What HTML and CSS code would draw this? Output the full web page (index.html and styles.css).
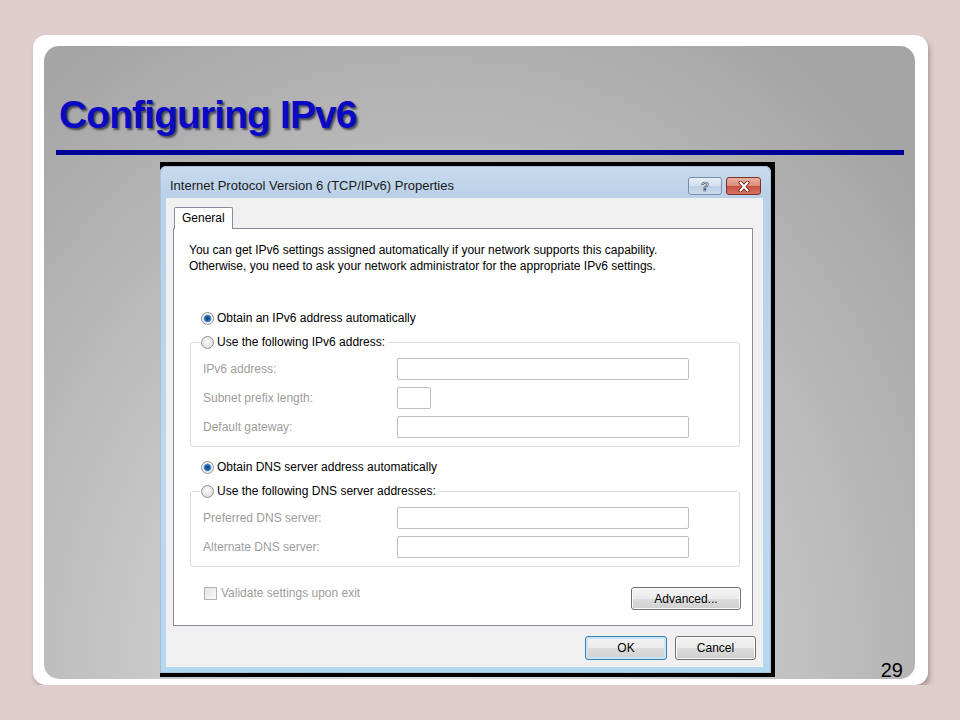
FILE: index.html
```html
<!DOCTYPE html>
<html lang="en">
<head>
    <meta charset="UTF-8">
    <meta name="viewport" content="width=device-width, initial-scale=1.0">
    <title>Configuring IPv6</title>
    <link rel="stylesheet" href="styles.css">
</head>
<body>
    <div class="slide">
        <div class="stage">
            <h1 class="title">Configuring IPv6</h1>
            <div class="rule"></div>

            <div class="shot-row">
                <div class="shot">
                    <div class="dialog">
                        <div class="titlebar">
                            <span class="caption">Internet Protocol Version 6 (TCP/IPv6) Properties</span>
                            <div class="caption-btns">
                                <span class="cbtn help">?</span>
                                <span class="cbtn close">
                                    <svg width="16" height="11" viewBox="0 0 16 11">
                                        <path d="M4.5 1.5 L11.5 9.5 M11.5 1.5 L4.5 9.5" stroke="#6e2418" stroke-width="4" stroke-linecap="round"/>
                                        <path d="M4.5 1.5 L11.5 9.5 M11.5 1.5 L4.5 9.5" stroke="#ffffff" stroke-width="2.2" stroke-linecap="round"/>
                                    </svg>
                                </span>
                            </div>
                        </div>

                        <div class="client">
                            <div class="tabs">
                                <span class="tab">General</span>
                            </div>

                            <div class="panel">
                                <p class="intro">You can get IPv6 settings assigned automatically if your network supports this capability.<br>Otherwise, you need to ask your network administrator for the appropriate IPv6 settings.</p>

                                <div class="opt"><span class="radio on"></span>Obtain an IPv6 address automatically</div>

                                <fieldset class="group">
                                    <legend><span class="opt-inline"><span class="radio"></span>Use the following IPv6 address:</span></legend>
                                    <div class="fields">
                                        <span class="lbl">IPv6 address:</span><span class="box wide"></span>
                                        <span class="lbl">Subnet prefix length:</span><span class="box small"></span>
                                        <span class="lbl">Default gateway:</span><span class="box wide"></span>
                                    </div>
                                </fieldset>

                                <div class="opt opt-dns"><span class="radio on"></span>Obtain DNS server address automatically</div>

                                <fieldset class="group">
                                    <legend><span class="opt-inline"><span class="radio"></span>Use the following DNS server addresses:</span></legend>
                                    <div class="fields">
                                        <span class="lbl">Preferred DNS server:</span><span class="box wide"></span>
                                        <span class="lbl">Alternate DNS server:</span><span class="box wide"></span>
                                    </div>
                                </fieldset>

                                <div class="panel-foot">
                                    <div class="check"><span class="checkbox"></span>Validate settings upon exit</div>
                                    <span class="btn adv">Advanced...</span>
                                </div>
                            </div>

                            <div class="actions">
                                <span class="btn ok">OK</span>
                                <span class="btn">Cancel</span>
                            </div>
                        </div>
                    </div>
                </div>
                <span class="page-num">29</span>
            </div>
        </div>
    </div>
</body>
</html>
```

FILE: styles.css
```css
:root {
    --page-bg: #dfcecb;
    --title-blue: #0a0ac4;
    --rule-blue: #000094;
    --win-frame: #bdd3eb;
    --win-face: #f0f0f0;
    --win-line: #898c95;
    --disabled: #9d9d9d;
}

body {
    margin: 0;
    background: var(--page-bg);
    font-family: 'Liberation Sans', Arial, sans-serif;
}

/* slide frame */
.slide {
    box-sizing: border-box;
    width: 895px;
    height: 650px;
    margin: 35px 0 0 33px;
    padding: 11px 13px 6px 11px;
    background: #fff;
    border-radius: 13px;
    box-shadow: 2px 4px 5px rgba(110, 85, 85, 0.45);
}

.stage {
    height: 100%;
    display: flex;
    flex-direction: column;
    border-radius: 15px;
    background: radial-gradient(ellipse 72% 120% at 45% 100%, #e0e0e0 0%, #c9c9c9 45%, #a5a5a5 100%);
}

.title {
    margin: 49px 0 0 15px;
    font: bold 39px/39px 'Liberation Sans', Arial, sans-serif;
    letter-spacing: -0.9px;
    color: var(--title-blue);
    text-shadow: 2px 2px 2px rgba(20, 20, 40, 0.65);
}

.rule {
    width: 848px;
    height: 5px;
    margin: 16px 0 0 12px;
    background: var(--rule-blue);
}

.shot-row {
    flex: 1;
    display: flex;
    align-items: flex-start;
    margin-top: 7px;
}

.shot {
    margin-left: 116px;
    padding: 4px 4px 4px 0;
    background: #000;
}

.page-num {
    align-self: flex-end;
    margin-left: auto;
    margin-right: 12px;
    font: 20px/18px 'Liberation Sans', Arial, sans-serif;
    color: #000;
}

/* the windows dialog */
.dialog {
    box-sizing: border-box;
    width: 611px;
    height: 507px;
    display: flex;
    flex-direction: column;
    padding: 0 8px 6px 6px;
    border-radius: 6px 6px 0 0;
    background: linear-gradient(#c8daee 0, #bad0e8 32px, #bfd6ed 60%, #b4d7f0 100%);
    box-shadow: inset 0 0 0 1px #a9bfd8;
    font-size: 12px;
    color: #000;
}

.titlebar {
    box-sizing: border-box;
    height: 32px;
    display: flex;
    justify-content: space-between;
    align-items: flex-start;
    padding: 10px 2px 0 4px;
}

.caption {
    font-size: 13px;
    line-height: 20px;
    color: #1a1a1a;
}

.caption-btns {
    display: flex;
    gap: 4px;
    margin-top: 1px;
}

.cbtn {
    box-sizing: border-box;
    height: 18px;
    display: flex;
    align-items: center;
    justify-content: center;
    border: 1px solid #7b8ea9;
    border-radius: 3px;
}

.help {
    width: 34px;
    background: linear-gradient(#e6eef8 0%, #d2deec 50%, #bccee4 51%, #cbdaec 100%);
    font: bold 13px/1 'Liberation Sans', Arial, sans-serif;
    color: #f7f9fc;
    -webkit-text-stroke: 0.7px #3d4c63;
}

.close {
    width: 35px;
    border-color: #7a3328;
    background: linear-gradient(#eab0a2 0%, #db8a78 50%, #c8513f 51%, #d67460 100%);
}

.client {
    flex: 1;
    display: flex;
    flex-direction: column;
    padding: 9px 10px 7px 7px;
    background: var(--win-face);
}

.tabs {
    display: flex;
}

.tab {
    box-sizing: border-box;
    width: 59px;
    height: 22px;
    margin: 0 0 -1px 1px;
    padding-left: 7px;
    position: relative;
    z-index: 1;
    border: 1px solid var(--win-line);
    border-bottom: 0;
    border-radius: 2px 2px 0 0;
    background: #fff;
    line-height: 20px;
}

.panel {
    flex: 1;
    display: flex;
    flex-direction: column;
    border: 1px solid var(--win-line);
    background: #fff;
}

.intro {
    margin: 13px 0 0 15px;
    line-height: 16px;
}

.opt,
.opt-inline {
    display: flex;
    align-items: center;
    gap: 3px;
    height: 16px;
}

.opt {
    margin: 36px 0 0 27px;
}

.opt-dns {
    margin-top: 12px;
}

.radio {
    box-sizing: border-box;
    width: 13px;
    height: 13px;
    flex-shrink: 0;
    border: 1px solid #8f9297;
    border-radius: 50%;
    background: radial-gradient(circle at 50% 40%, #fbfbfb 0%, #e7e7e7 55%, #cfcfcf 100%);
}

.radio.on {
    background: radial-gradient(circle, #123f7a 0, #2a63a8 2.5px, #5d97d6 3.5px, #dfe9f3 4.2px, #f5f5f5 5px, #d6d6d6 100%);
}

.group {
    margin: 8px 12px 0 16px;
    padding: 0 12px 8px 12px;
    border: 1px solid #d6dce2;
    border-radius: 3px;
}

.group legend {
    margin-left: -3px;
    padding: 0 3px 0 1px;
}

.fields {
    display: grid;
    grid-template-columns: 194px auto;
    grid-auto-rows: 22px;
    row-gap: 7px;
    align-items: center;
    justify-items: start;
    margin-top: 8px;
}

.lbl {
    color: var(--disabled);
}

.box {
    box-sizing: border-box;
    height: 22px;
    border: 1px solid #bdbdbd;
    border-radius: 2px;
    background: #fff;
}

.box.wide {
    width: 292px;
}

.box.small {
    width: 34px;
}

.panel-foot {
    display: flex;
    justify-content: space-between;
    align-items: flex-start;
    margin: 20px 11px 0 30px;
}

.check {
    display: flex;
    align-items: center;
    gap: 4px;
    height: 14px;
    margin-top: -1px;
    color: var(--disabled);
}

.checkbox {
    box-sizing: border-box;
    width: 13px;
    height: 13px;
    border: 1px solid #b4b4b4;
    background: linear-gradient(135deg, #e2e2e2, #fbfbfb);
}

.btn {
    box-sizing: border-box;
    display: flex;
    align-items: center;
    justify-content: center;
    width: 81px;
    height: 24px;
    border: 1px solid #707070;
    border-radius: 3px;
    background: linear-gradient(#f3f3f3 0%, #ebebeb 50%, #dddddd 51%, #cfcfcf 100%);
    box-shadow: inset 0 0 0 1px #fbfbfb;
}

.btn.adv {
    width: 110px;
    height: 23px;
}

.btn.ok {
    width: 82px;
    border-color: #3c7fb1;
    box-shadow: inset 0 0 0 2px #c6e7f8;
}

.actions {
    display: flex;
    justify-content: flex-end;
    gap: 8px;
    margin: 10px -3px 0 0;
}
```
